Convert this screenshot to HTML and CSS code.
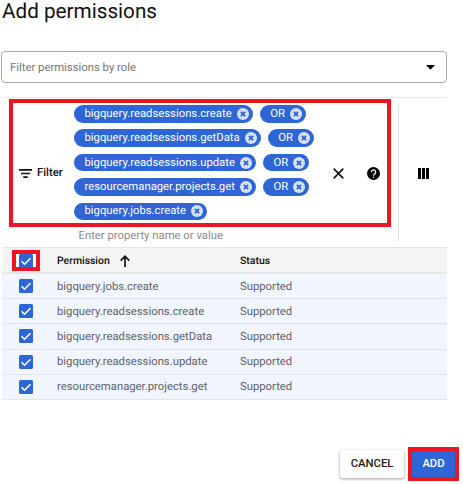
FILE: index.html
```html
<!DOCTYPE html>
<html lang="en">
<head>
<meta charset="utf-8">
<title>Add permissions</title>
<link rel="stylesheet" href="styles.css">
</head>
<body>
<svg class="defs" width="0" height="0" aria-hidden="true">
  <symbol id="remove" viewBox="0 0 12 12"><circle cx="6" cy="6" r="6" fill="#d5e1fa"/><path d="M3.9 3.9l4.2 4.2M8.1 3.9L3.9 8.1" stroke="#2d5fcf" stroke-width="1.7"/></symbol>
  <symbol id="check" viewBox="0 0 14 14"><rect width="14" height="14" rx="1.5" fill="#2f66d6"/><path d="M2.5 7.2l3 3 6-6" fill="none" stroke="#fff" stroke-width="1.6"/></symbol>
</svg>
<main class="dialog">
  <h1 class="title">Add permissions</h1>
  <div class="select">
    <span>Filter permissions by role</span>
    <svg width="9" height="5" viewBox="0 0 9 5"><path d="M0 0h9L4.5 4.7z"/></svg>
  </div>
  <section class="filter">
    <div class="filter-main">
      <div class="filter-label">
        <svg width="13" height="9" viewBox="0 0 13 9"><path d="M0 .9h13M2 4.5h9M4.3 8.1h4.4" stroke="#111" stroke-width="1.6"/></svg>
        <span>Filter</span>
      </div>
      <div class="chips">
        <div class="chip-row"><span class="chip">bigquery.readsessions.create<svg class="x"><use href="#remove"/></svg></span><span class="chip">OR<svg class="x"><use href="#remove"/></svg></span></div>
        <div class="chip-row"><span class="chip">bigquery.readsessions.getData<svg class="x"><use href="#remove"/></svg></span><span class="chip">OR<svg class="x"><use href="#remove"/></svg></span></div>
        <div class="chip-row"><span class="chip">bigquery.readsessions.update<svg class="x"><use href="#remove"/></svg></span><span class="chip">OR<svg class="x"><use href="#remove"/></svg></span></div>
        <div class="chip-row"><span class="chip">resourcemanager.projects.get<svg class="x"><use href="#remove"/></svg></span><span class="chip">OR<svg class="x"><use href="#remove"/></svg></span></div>
        <div class="chip-row"><span class="chip">bigquery.jobs.create<svg class="x"><use href="#remove"/></svg></span></div>
        <div class="prompt">Enter property name or value</div>
      </div>
      <svg class="clear" width="11" height="11" viewBox="0 0 11 11"><path d="M.7.7l9.6 9.6M10.3.7L.7 10.3" stroke="#111" stroke-width="1.7"/></svg>
      <svg class="help" width="13" height="13" viewBox="0 0 24 24"><circle cx="12" cy="12" r="12"/><path d="M8 9.4a4 4 0 1 1 6.7 3c-1.5 1.3-2.6 1.8-2.6 3.6M12.1 17.5v2.5" fill="none" stroke="#fff" stroke-width="2.3"/></svg>
    </div>
    <div class="columns"><svg width="11" height="11" viewBox="0 0 11 11"><path d="M0 0h3v11H0zM4 0h3v11H4zM8 0h3v11H8z"/></svg></div>
    <div class="mark mark-filter"></div>
  </section>
  <section class="table">
    <div class="row head"><span class="pick"><svg class="box"><use href="#check"/></svg><span class="mark mark-check"></span></span><span class="name">Permission<svg class="sort" width="10" height="12" viewBox="0 0 10 12"><path d="M5 12V1.3M.7 5.6L5 1.2l4.3 4.4" fill="none" stroke="#111" stroke-width="1.7"/></svg></span><span>Status</span></div>
    <div class="row"><span class="pick"><svg class="box"><use href="#check"/></svg></span><span class="name">bigquery.jobs.create</span><span>Supported</span></div>
    <div class="row"><span class="pick"><svg class="box"><use href="#check"/></svg></span><span class="name">bigquery.readsessions.create</span><span>Supported</span></div>
    <div class="row"><span class="pick"><svg class="box"><use href="#check"/></svg></span><span class="name">bigquery.readsessions.getData</span><span>Supported</span></div>
    <div class="row"><span class="pick"><svg class="box"><use href="#check"/></svg></span><span class="name">bigquery.readsessions.update</span><span>Supported</span></div>
    <div class="row"><span class="pick"><svg class="box"><use href="#check"/></svg></span><span class="name">resourcemanager.projects.get</span><span>Supported</span></div>
  </section>
  <footer class="actions">
    <button class="cancel">CANCEL</button>
    <button class="add">ADD</button>
  </footer>
</main>
</body>
</html>
```

FILE: styles.css
```css
* { box-sizing: border-box; }
body { margin: 0; background: #fff; color: #111; font: 11.3px/14px Roboto, sans-serif; text-rendering: geometricPrecision; overflow: hidden; }
svg { display: block; flex: none; }
.defs { position: absolute; }
.dialog { width: 463px; height: 484px; padding-left: 2px; }
.title { margin: 0; height: 51px; font-size: 20.7px; font-weight: 400; line-height: 25px; }
.select { display: flex; align-items: center; justify-content: space-between; width: 446px; height: 32px; margin-left: -1px; padding: 0 11px 0 8px; border: 1px solid #a4a8ae; border-radius: 4px; color: #757575; }
.select span { padding-top: 2px; }
.filter { position: relative; display: flex; width: 445px; height: 150px; margin-top: 14px; padding-top: 7px; border-top: 1px solid #e6e6e6; }
.filter-main { display: flex; width: 397px; height: 136px; border-right: 1px solid #e2e2e2; }
.filter-label { display: flex; align-items: center; gap: 5px; width: 72px; padding-left: 17px; font-weight: 500; }
.chips { width: 258px; }
.chip-row { display: flex; gap: 7px; height: 24.4px; }
.chip { display: flex; align-items: center; height: 17.5px; padding: 0 4px 0 10.5px; border-radius: 9px; background: #2f66d6; color: #fff; }
.x { width: 12px; height: 12px; margin-left: 5px; }
.prompt { padding: 2px 0 0 4.5px; color: #8a8a8a; }
.clear { align-self: center; margin-left: 1px; }
.help { align-self: center; margin-left: 23px; }
.columns { display: flex; align-items: center; height: 136px; padding-left: 18.5px; }
.mark { position: absolute; border: 3.5px solid #ed1520; }
.mark-filter { left: 7px; top: 1px; width: 382px; height: 128px; border-width: 4px; }
.table { width: 445px; border-top: 1px solid #e4e4e4; }
.row { display: grid; grid-template-columns: 55px 183px 1fr; align-items: center; height: 25.2px; border-bottom: 1px solid #e0e4eb; background: #f0f5fe; color: #5f6368; }
.row > span { padding-top: 1px; }
.row > .pick { position: relative; padding: 0 0 0 17px; }
.head { height: 26px; background: #f4f4f4; border-bottom: 2px solid #e6e7e9; color: #111; font-size: 10.45px; font-weight: 500; }
.box { width: 14px; height: 14px; }
.head .box { margin-top: 1px; box-shadow: -3px 0 #fff, 3px 0 #fff; }
.mark-check { left: 10px; top: -3px; width: 28px; height: 21px; border-width: 4px; }
.name { display: flex; align-items: center; }
.sort { margin-left: 10px; }
.actions { display: flex; gap: 4px; margin: 47px 0 0 338px; }
button { font: 500 11.3px/14px Roboto, sans-serif; border: 0; padding: 1px 0 0; }
.cancel { width: 64px; height: 28px; margin-top: 3px; border-radius: 3px; background: #fff; color: #222; box-shadow: 0 1px 3px rgba(0,0,0,.4); }
.add { width: 51px; height: 34px; border: 4px solid #ed1520; background: #2f66d6; color: #fff; }
```
